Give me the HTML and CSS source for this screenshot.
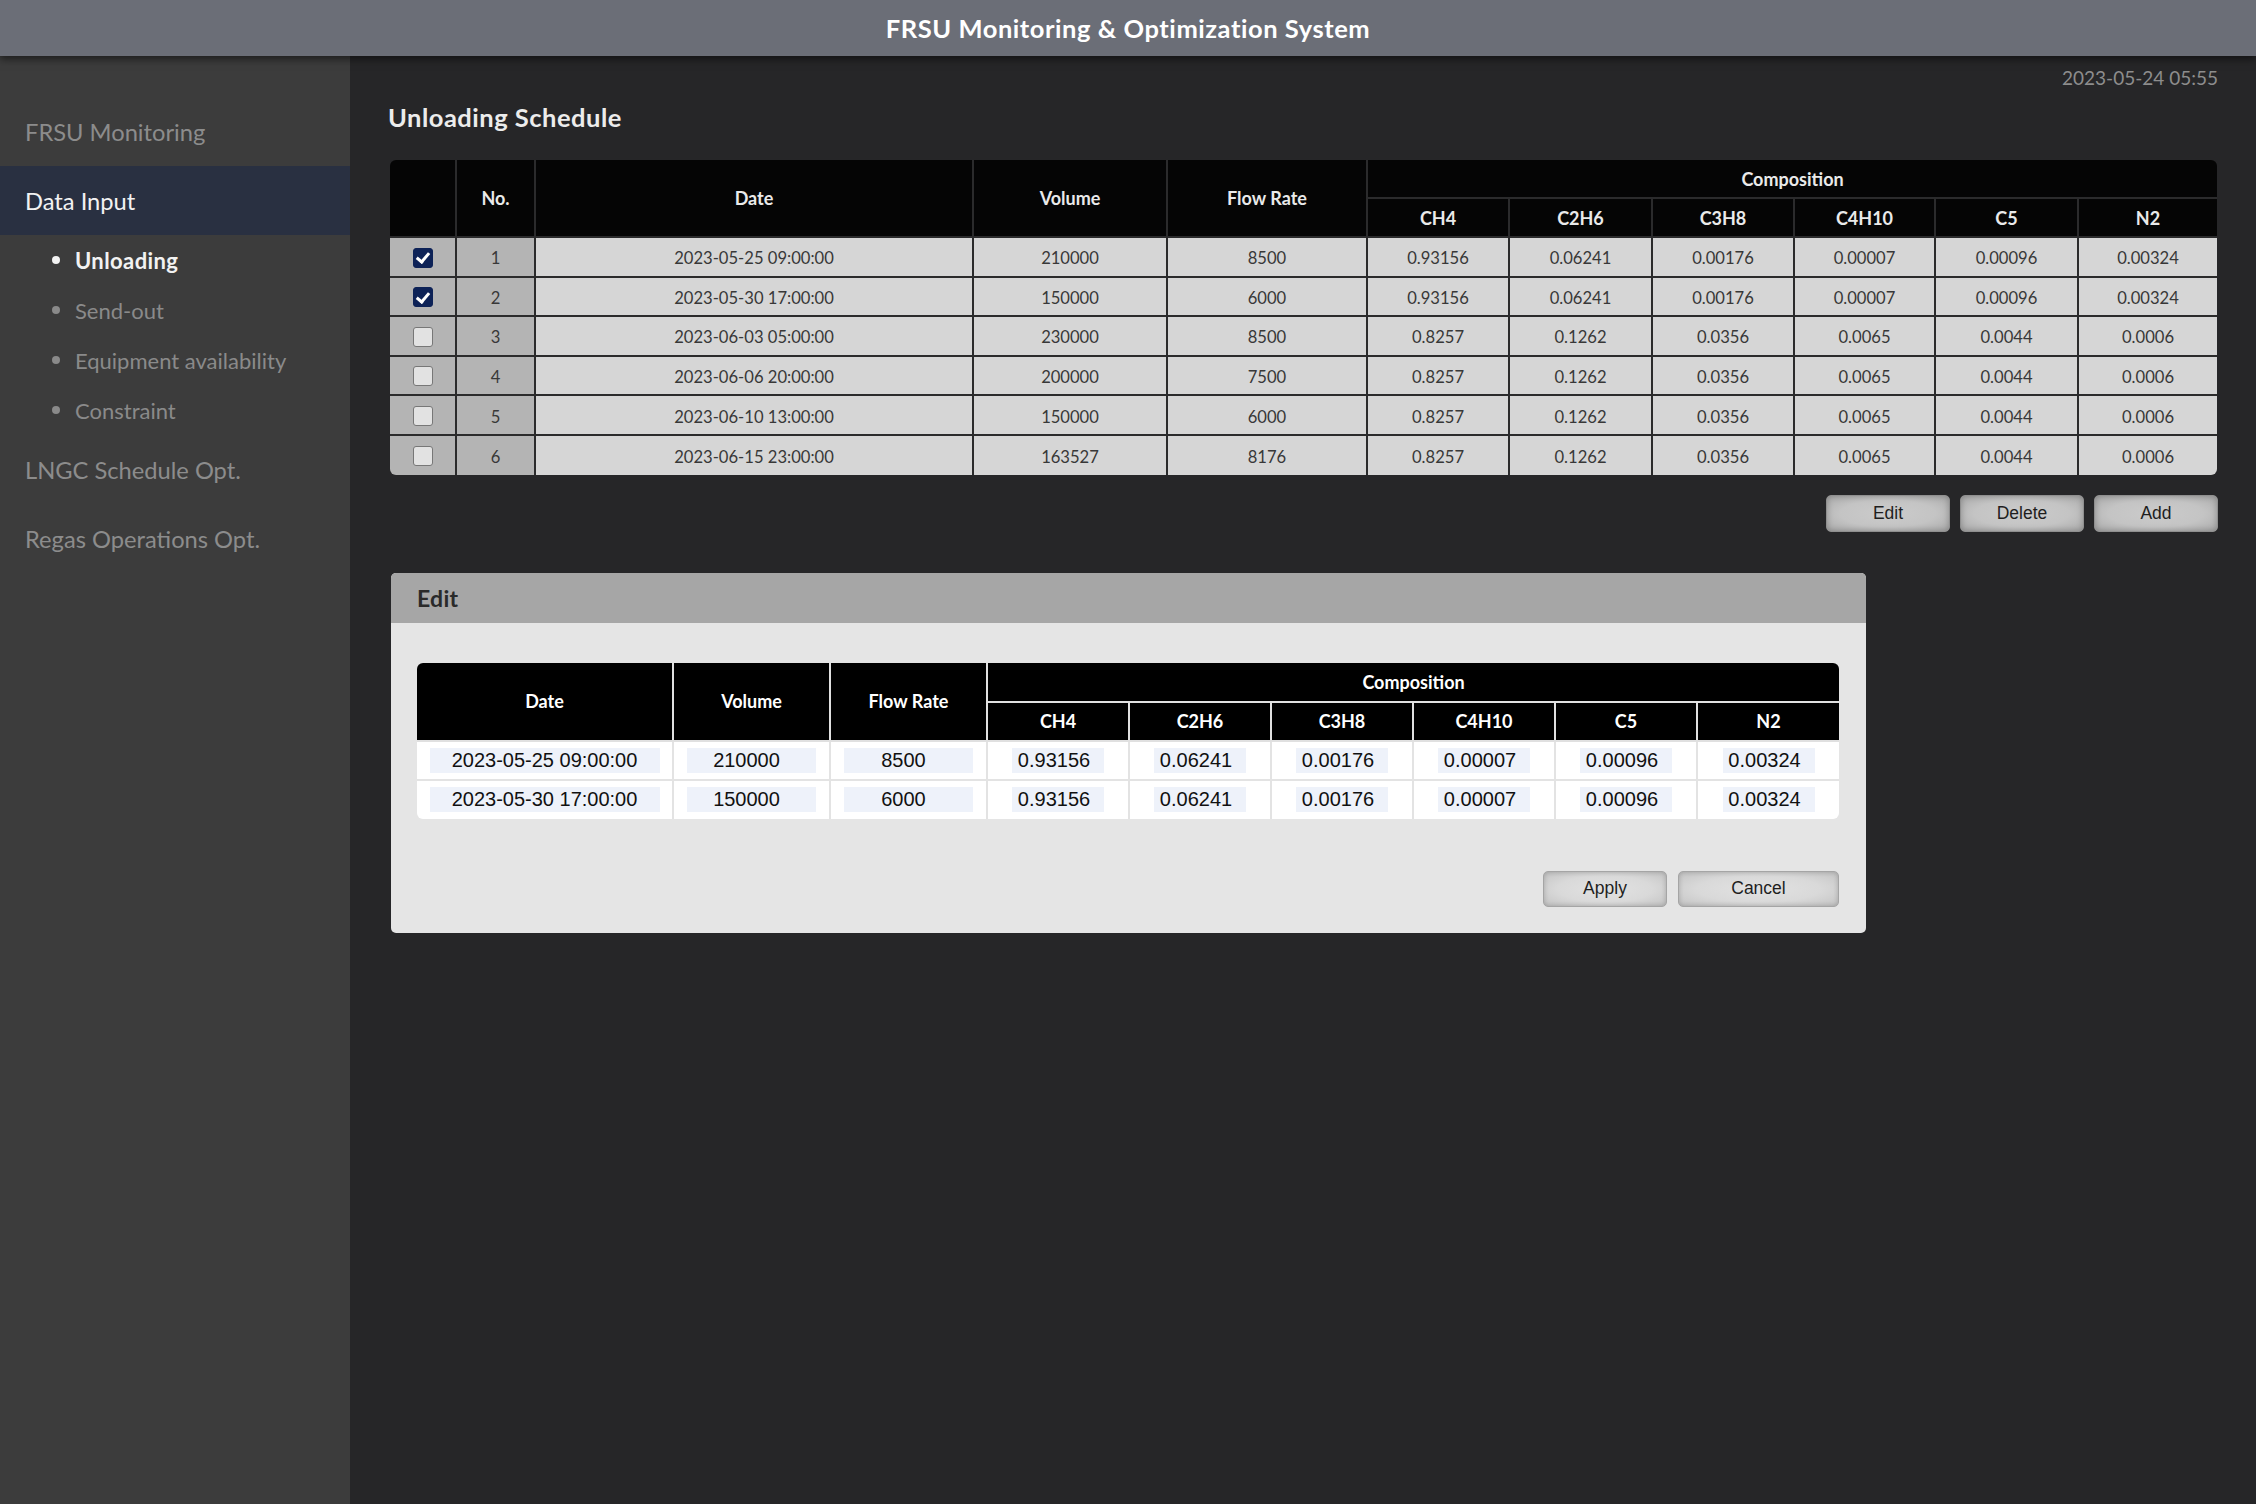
FILE: index.html
```html
<!DOCTYPE html>
<html lang="en">
<head>
<meta charset="utf-8">
<title>FRSU Monitoring &amp; Optimization System</title>
<link rel="stylesheet" href="styles.css">
</head>
<body>
<header class="topbar">FRSU Monitoring &amp; Optimization System</header>
<div class="layout">
  <nav class="sidebar">
    <div class="nav-item">FRSU Monitoring</div>
    <div class="nav-item active">Data Input</div>
    <ul class="subnav">
      <li class="sub-item current">Unloading</li>
      <li class="sub-item">Send-out</li>
      <li class="sub-item">Equipment availability</li>
      <li class="sub-item">Constraint</li>
    </ul>
    <div class="nav-item">LNGC Schedule Opt.</div>
    <div class="nav-item">Regas Operations Opt.</div>
  </nav>
  <main class="content">
    <div class="timestamp">2023-05-24 05:55</div>
    <h2 class="page-title">Unloading Schedule</h2>
    <div class="grid-wrap">
      <table class="grid">
        <colgroup>
          <col class="c-chk"><col class="c-no"><col class="c-date"><col class="c-vol"><col class="c-flow">
          <col class="c-ch4"><col class="c-c2"><col class="c-c3"><col class="c-c4"><col class="c-c5"><col class="c-n2">
        </colgroup>
        <thead>
          <tr class="h1">
            <th rowspan="2"></th><th rowspan="2">No.</th><th rowspan="2">Date</th><th rowspan="2">Volume</th><th rowspan="2">Flow Rate</th>
            <th colspan="6">Composition</th>
          </tr>
          <tr class="h2">
            <th>CH4</th><th>C2H6</th><th>C3H8</th><th>C4H10</th><th>C5</th><th>N2</th>
          </tr>
        </thead>
        <tbody>
          <tr><td class="sel"><span class="chk on"></span></td><td class="num">1</td><td>2023-05-25 09:00:00</td><td>210000</td><td>8500</td><td>0.93156</td><td>0.06241</td><td>0.00176</td><td>0.00007</td><td>0.00096</td><td>0.00324</td></tr>
          <tr><td class="sel"><span class="chk on"></span></td><td class="num">2</td><td>2023-05-30 17:00:00</td><td>150000</td><td>6000</td><td>0.93156</td><td>0.06241</td><td>0.00176</td><td>0.00007</td><td>0.00096</td><td>0.00324</td></tr>
          <tr><td class="sel"><span class="chk"></span></td><td class="num">3</td><td>2023-06-03 05:00:00</td><td>230000</td><td>8500</td><td>0.8257</td><td>0.1262</td><td>0.0356</td><td>0.0065</td><td>0.0044</td><td>0.0006</td></tr>
          <tr><td class="sel"><span class="chk"></span></td><td class="num">4</td><td>2023-06-06 20:00:00</td><td>200000</td><td>7500</td><td>0.8257</td><td>0.1262</td><td>0.0356</td><td>0.0065</td><td>0.0044</td><td>0.0006</td></tr>
          <tr><td class="sel"><span class="chk"></span></td><td class="num">5</td><td>2023-06-10 13:00:00</td><td>150000</td><td>6000</td><td>0.8257</td><td>0.1262</td><td>0.0356</td><td>0.0065</td><td>0.0044</td><td>0.0006</td></tr>
          <tr><td class="sel"><span class="chk"></span></td><td class="num">6</td><td>2023-06-15 23:00:00</td><td>163527</td><td>8176</td><td>0.8257</td><td>0.1262</td><td>0.0356</td><td>0.0065</td><td>0.0044</td><td>0.0006</td></tr>
        </tbody>
      </table>
    </div>
    <div class="actions">
      <button class="btn">Edit</button>
      <button class="btn">Delete</button>
      <button class="btn">Add</button>
    </div>

    <section class="panel">
      <div class="panel-head">Edit</div>
      <div class="panel-body">
        <div class="edit-wrap">
          <table class="edit">
            <colgroup>
              <col class="e-date"><col class="e-vol"><col class="e-flow">
              <col class="e-c"><col class="e-c"><col class="e-c"><col class="e-c"><col class="e-c"><col class="e-c">
            </colgroup>
            <thead>
              <tr class="h1">
                <th rowspan="2">Date</th><th rowspan="2">Volume</th><th rowspan="2">Flow Rate</th>
                <th colspan="6">Composition</th>
              </tr>
              <tr class="h2">
                <th>CH4</th><th>C2H6</th><th>C3H8</th><th>C4H10</th><th>C5</th><th>N2</th>
              </tr>
            </thead>
            <tbody>
              <tr>
                <td><input class="in in-date" value="2023-05-25 09:00:00"></td>
                <td><input class="in in-mid" value="210000"></td>
                <td><input class="in in-mid" value="8500"></td>
                <td><input class="in in-sm" value="0.93156"></td>
                <td><input class="in in-sm" value="0.06241"></td>
                <td><input class="in in-sm" value="0.00176"></td>
                <td><input class="in in-sm" value="0.00007"></td>
                <td><input class="in in-sm" value="0.00096"></td>
                <td><input class="in in-sm" value="0.00324"></td>
              </tr>
              <tr>
                <td><input class="in in-date" value="2023-05-30 17:00:00"></td>
                <td><input class="in in-mid" value="150000"></td>
                <td><input class="in in-mid" value="6000"></td>
                <td><input class="in in-sm" value="0.93156"></td>
                <td><input class="in in-sm" value="0.06241"></td>
                <td><input class="in in-sm" value="0.00176"></td>
                <td><input class="in in-sm" value="0.00007"></td>
                <td><input class="in in-sm" value="0.00096"></td>
                <td><input class="in in-sm" value="0.00324"></td>
              </tr>
            </tbody>
          </table>
        </div>
        <div class="panel-actions">
          <button class="btn btn-light btn-apply">Apply</button>
          <button class="btn btn-light btn-cancel">Cancel</button>
        </div>
      </div>
    </section>
  </main>
</div>
</body>
</html>
```

FILE: styles.css
```css
* { box-sizing: border-box; }

html, body {
  margin: 0;
  padding: 0;
}

body {
  width: 2256px;
  height: 1504px;
  overflow: hidden;
  background: #262628;
  font-family: "Lato", "Liberation Sans", sans-serif;
  color: #ddd;
  display: flex;
  flex-direction: column;
}

.topbar {
  height: 56px;
  flex: 0 0 56px;
  background: #6b6e77;
  color: #fff;
  font-weight: 700;
  font-size: 25.5px;
  letter-spacing: 0.55px;
  display: flex;
  align-items: center;
  justify-content: center;
  box-shadow: 0 3px 8px rgba(0, 0, 0, 0.55);
  position: relative;
  z-index: 2;
}

.layout {
  flex: 1;
  display: flex;
  min-height: 0;
}

/* Sidebar */
.sidebar {
  width: 350px;
  flex: 0 0 350px;
  background: #3c3c3c;
  padding-top: 41px;
}

.nav-item {
  height: 69px;
  display: flex;
  align-items: center;
  padding-left: 25px;
  font-size: 23.7px;
  color: #8c8c8c;
}

.nav-item.active {
  background: #293041;
  color: #f2f2f2;
}

.subnav {
  list-style: none;
  margin: 0;
  padding: 0;
}

.sub-item {
  height: 50px;
  display: flex;
  align-items: center;
  padding-left: 52px;
  font-size: 22px;
  color: #8a8a8a;
}

.sub-item::before {
  content: "";
  width: 8px;
  height: 8px;
  border-radius: 50%;
  background: #8a8a8a;
  margin-right: 15px;
}

.sub-item.current {
  color: #f2f2f2;
  font-weight: 700;
  letter-spacing: 0.4px;
}

.sub-item.current::before {
  background: #f2f2f2;
}

/* Main content */
.content {
  flex: 1;
  padding: 0 38px 0 40px;
  min-width: 0;
}

.timestamp {
  margin-top: 9px;
  text-align: right;
  font-size: 19px;
  line-height: 26px;
  color: #8d8d8d;
}

.page-title {
  margin: 9px 0 0 -2px;
  font-size: 25.5px;
  letter-spacing: 0.5px;
  line-height: 34px;
  font-weight: 700;
  color: #ececec;
}

.grid-wrap {
  margin-top: 26px;
  margin-right: 1px;
  border-radius: 6px;
  overflow: hidden;
}

.grid {
  width: 100%;
  table-layout: fixed;
  border-collapse: collapse;
  border-style: hidden;
}

.c-chk { width: 66px; }
.c-no { width: 79px; }
.c-date { width: 438px; }
.c-vol { width: 194px; }
.c-flow { width: 200px; }
.c-ch4 { width: 142px; }
.c-c2 { width: 143px; }
.c-c3 { width: 142px; }
.c-c4 { width: 141px; }
.c-c5 { width: 143px; }
.c-n2 { width: 139px; }

.grid th,
.grid td {
  border: 2px solid #2b2b2c;
  padding: 0;
  text-align: center;
  vertical-align: middle;
}

.grid th {
  background: #050505;
  color: #eaeaea;
  font-weight: 700;
  font-size: 18px;
}

.grid .h1 th { height: 38px; }
.grid .h2 th { height: 39px; }

.grid td {
  height: 39.6px;
  background: #d6d6d6;
  color: #383838;
  font-weight: 400;
  font-size: 16.6px;
  padding-top: 3px;
}

.grid td.sel {
  padding-top: 0;
}

.grid td.sel,
.grid td.num {
  background: #b4b4b4;
}

.chk {
  display: inline-block;
  width: 20px;
  height: 20px;
  border-radius: 3px;
  background: #e2e2e2;
  border: 1.5px solid #777;
  vertical-align: middle;
  position: relative;
}

.chk.on {
  background: #0d2257;
  border-color: #0d2257;
}

.chk.on::after {
  content: "";
  position: absolute;
  left: 5.5px;
  top: 1.5px;
  width: 5px;
  height: 10px;
  border-right: 3px solid #fff;
  border-bottom: 3px solid #fff;
  transform: rotate(40deg);
}

.actions {
  display: flex;
  justify-content: flex-end;
  gap: 10px;
  margin-top: 20px;
}

.btn {
  width: 124px;
  height: 37px;
  border: 1px solid #8f8f8f;
  border-radius: 5px;
  background: radial-gradient(ellipse at center, #cbcbcb 0%, #c4c4c4 55%, #a9a9a9 100%);
  box-shadow: inset 0 0 6px rgba(0, 0, 0, 0.25);
  font-family: "Liberation Sans", Arial, sans-serif;
  font-size: 17.5px;
  color: #1e1e1e;
  padding: 0;
  cursor: pointer;
}

/* Edit panel */
.panel {
  margin-top: 41px;
  margin-left: 1px;
  width: 1475px;
  background: #e5e5e5;
  border-radius: 5px;
  overflow: hidden;
}

.panel-head {
  height: 50px;
  background: #a6a6a6;
  color: #2a2a2a;
  font-weight: 700;
  font-size: 23px;
  letter-spacing: 0.3px;
  display: flex;
  align-items: center;
  padding-left: 26px;
}

.panel-body {
  padding: 40px 27px 26px 26px;
}

.edit-wrap {
  border-radius: 6px;
  overflow: hidden;
}

.edit {
  width: 100%;
  table-layout: fixed;
  border-collapse: collapse;
  border-style: hidden;
}

.e-date { width: 256px; }
.e-vol { width: 157px; }
.e-flow { width: 157px; }
.e-c { width: 142px; }

.edit th,
.edit td {
  padding: 0;
  text-align: center;
  vertical-align: middle;
}

.edit th {
  background: #000;
  color: #fff;
  font-weight: 700;
  font-size: 18px;
  border: 2px solid #e0e0e0;
}

.edit .h1 th { height: 39px; }
.edit .h2 th { height: 39px; }

.edit td {
  background: #fff;
  height: 39px;
  border: 2px solid #e3e3e3;
}

.in {
  height: 25px;
  border: none;
  background: #eef2fa;
  font-family: "Liberation Sans", Arial, sans-serif;
  font-size: 20px;
  color: #111;
  text-align: center;
  padding: 0;
  vertical-align: middle;
}

.in-date { width: 230px; }
.in-mid { width: 129px; padding-right: 10px; }
.in-sm { width: 92px; padding-right: 8px; }

.panel-actions {
  display: flex;
  justify-content: flex-end;
  gap: 11px;
  margin-top: 52px;
}

.btn-light {
  height: 36px;
  border-color: #a5a5a5;
  background: radial-gradient(ellipse at center, #e2e2e2 0%, #d9d9d9 55%, #c2c2c2 100%);
  box-shadow: inset 0 0 5px rgba(0, 0, 0, 0.2);
}

.btn-cancel { width: 161px; }
```
